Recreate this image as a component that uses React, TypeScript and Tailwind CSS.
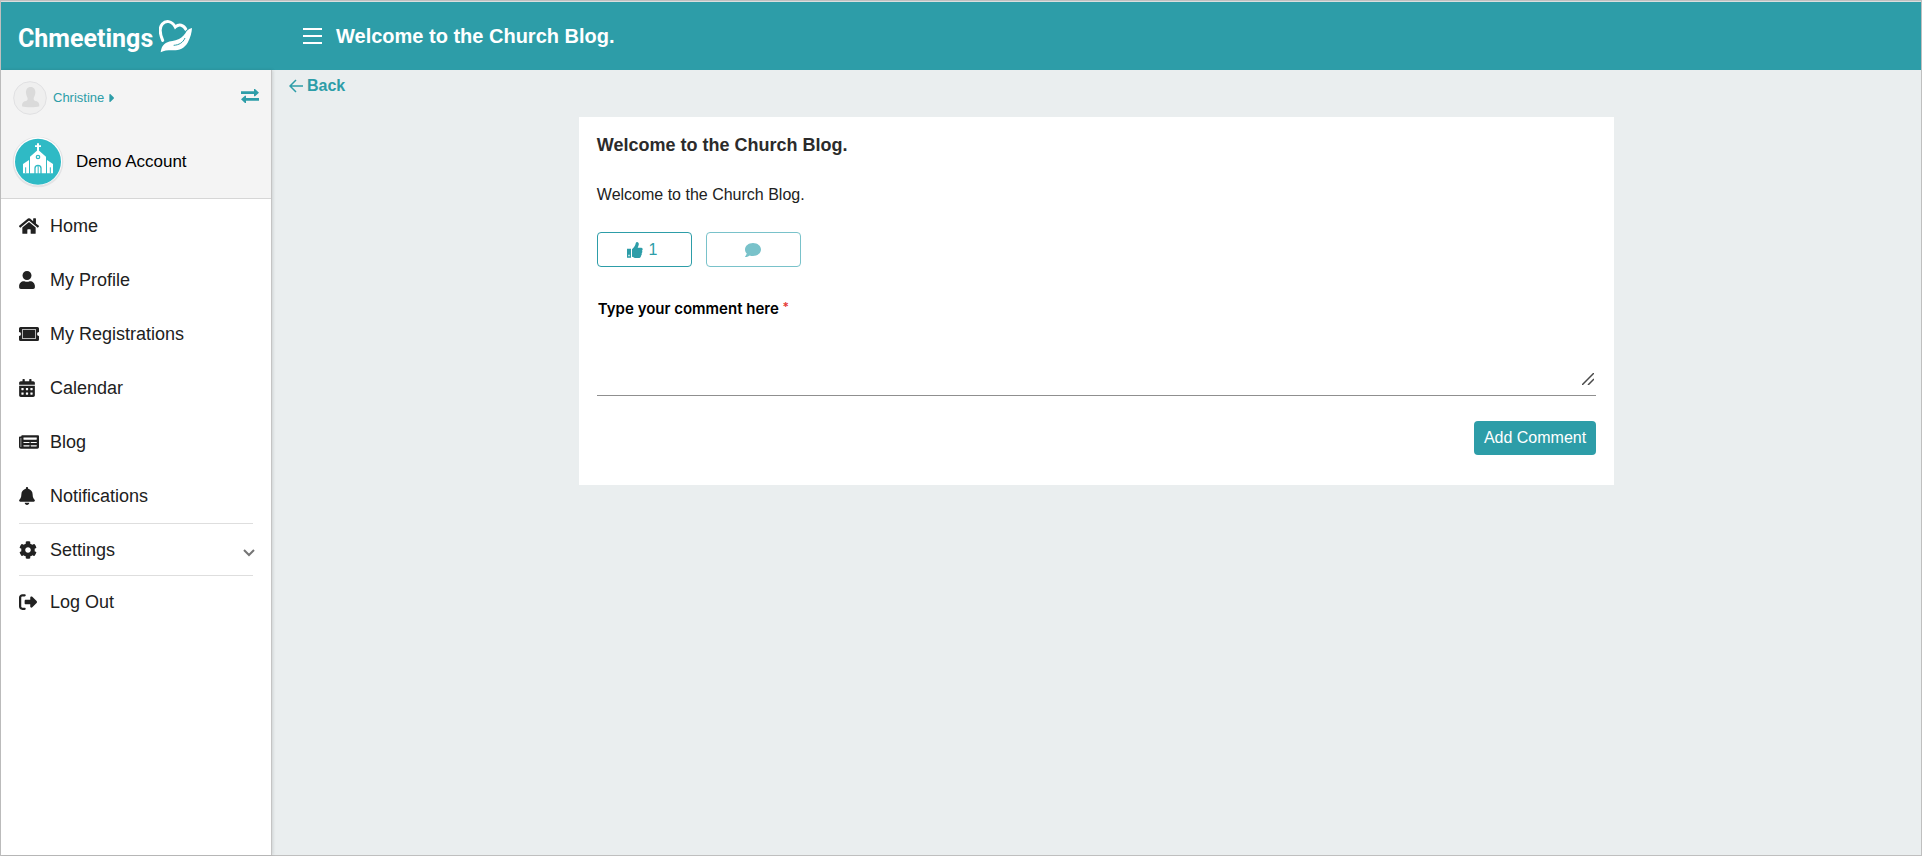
import type { ComponentType } from "react";
import {
  FaHome,
  FaUser,
  FaCalendarAlt,
  FaNewspaper,
  FaBell,
  FaCog,
  FaComment,
  FaCaretRight,
} from "react-icons/fa";
import { FaRightFromBracket } from "react-icons/fa6";

interface IconProps {
  className?: string;
}

interface MenuItem {
  label: string;
  icon: ComponentType<IconProps>;
  size: string;
}

function TicketIcon({ className }: IconProps) {
  return (
    <svg className={className} viewBox="0 0 20 18" aria-hidden="true">
      <path
        fill="currentColor"
        d="M1.5 2h17A1.5 1.5 0 0 1 20 3.5v3.5a2 2 0 0 0 0 4v3.5a1.5 1.5 0 0 1-1.5 1.5h-17A1.5 1.5 0 0 1 0 14.5V11a2 2 0 0 0 0-4V3.5A1.5 1.5 0 0 1 1.5 2z"
      />
      <rect x="3.5" y="4.5" width="13" height="9" fill="none" stroke="#b8b8b8" />
    </svg>
  );
}

function HandHeart() {
  return (
    <svg className="h-[34px] w-[34px]" viewBox="0 0 102 102" aria-hidden="true">
      <path
        d="M11 64C3 45 1 25 10 15C20 4 38 4 49 24C60 14 74 17 81 32"
        fill="none"
        stroke="#fff"
        strokeWidth="9"
        strokeLinecap="round"
      />
      <path
        fill="#fff"
        stroke="#2d9da8"
        strokeWidth="6"
        paintOrder="stroke"
        d="M5 100C7 86 11 77 22 71C34 65 46 67 60 60C70 55 79 45 83 36C88 32 93 28 99 27C98 40 95 56 86 71C75 89 59 95 39 94C25 94 15 95 5 100Z"
      />
      <path d="M44 79C60 78 72 71 78 57" fill="none" stroke="#2d9da8" strokeWidth="3" />
    </svg>
  );
}

function ChurchBadge() {
  return (
    <svg className="h-[52px] w-[52px]" viewBox="0 0 156 156" aria-hidden="true">
      <circle cx="78" cy="78" r="76" fill="#e3e3e5" />
      <circle cx="78" cy="76" r="72" fill="#fff" />
      <circle cx="78" cy="77" r="69" fill="#2fbac5" />
      <g fill="#fff">
        <path d="M75 22h6v6h6v5h-6v11h-6V33h-6v-5h6z" />
        <path d="M78 41L102 62V112H89V97a11 11 0 0 0-22 0V112H54V62z" />
        <path d="M51 72V112H33V84z" />
        <path d="M105 72V112H123V84z" />
        <path d="M71 112V97a7 7 0 0 1 14 0V112h-5V90h-3V112z" />
      </g>
      <circle cx="78" cy="63" r="5" fill="#fff" stroke="#2fbac5" strokeWidth="4" />
      <path d="M41 112V94M115 112V94" stroke="#2fbac5" strokeWidth="3" />
    </svg>
  );
}

function Avatar() {
  return (
    <svg className="h-[34px] w-[34px]" viewBox="0 0 102 102" aria-hidden="true">
      <circle cx="51" cy="51" r="49" fill="#efefef" stroke="#e0e0e2" strokeWidth="3" />
      <path
        fill="#dadada"
        d="M53 18c10 0 15 8 14 18c-1 9-4 11-5 17c0 5 3 6 9 8c6 2 8 6 8 15c-10 4-42 4-52 0c0-9 2-13 8-15c6-2 9-3 9-8c-1-6-4-8-5-17c-1-10 4-18 14-18z"
      />
    </svg>
  );
}

function SwapIcon() {
  return (
    <svg className="h-[14px] w-[18px]" viewBox="0 0 54 42" aria-hidden="true">
      <path fill="#2d9da8" d="M0 7h39V0h3l12 11l-12 11h-3V15H0zM54 27H15V20h-3L0 31l12 11h3V35h39z" />
    </svg>
  );
}

function ThumbIcon() {
  return (
    <svg className="h-4 w-4" viewBox="0 0 48 48" aria-hidden="true">
      <path fill="currentColor" fillRule="evenodd" d="M0 20h12v27H0zM4 38v5h4v-5z" />
      <path
        fill="currentColor"
        d="M15 22C19 18 23 13 25 8C26 4 27 0 30 0C35 0 36 5 35 9C34 12 33 15 32 17H43C48 18 48 24 45 26C47 29 46 32 44 34C45 37 44 40 42 41C42 45 39 48 34 48H27C22 48 19 45 15 44z"
      />
    </svg>
  );
}

const menu: MenuItem[] = [
  { label: "Home", icon: FaHome, size: "h-[18px] w-5" },
  { label: "My Profile", icon: FaUser, size: "h-[18px] w-4" },
  { label: "My Registrations", icon: TicketIcon, size: "h-[18px] w-5" },
  { label: "Calendar", icon: FaCalendarAlt, size: "h-[18px] w-4" },
  { label: "Blog", icon: FaNewspaper, size: "h-[18px] w-5" },
  { label: "Notifications", icon: FaBell, size: "h-[18px] w-4" },
];

function Header() {
  return (
    <header className="flex h-[69px] items-center border-t border-[#d9dede] bg-[#2d9da8] text-white">
      <a href="#" className="flex w-[284px] items-center pl-[17px]">
        <span className="pt-1.5 font-[Roboto] text-[25px] leading-8 font-bold">Chmeetings</span>
        <span className="ml-1.5">
          <HandHeart />
        </span>
      </a>
      <button aria-label="Toggle menu" className="ml-[18px] flex flex-col gap-[5px]">
        <span className="h-0.5 w-[19px] bg-white" />
        <span className="h-0.5 w-[19px] bg-white" />
        <span className="h-0.5 w-[19px] bg-white" />
      </button>
      <h1 className="ml-3.5 text-xl font-bold">Welcome to the Church Blog.</h1>
    </header>
  );
}

function Sidebar() {
  return (
    <aside className="z-10 w-[271px] shrink-0 border-r border-[#c4c4c4] bg-white shadow-[1px_0_3px_rgba(0,0,0,0.12)]">
      <div className="h-[129px] border-b border-[#d6d6d6] bg-[#f4f4f4] px-[11px] pt-[11px]">
        <div className="flex items-center justify-between px-px">
          <a href="#" className="flex items-center text-[13px] text-[#2d9da8]">
            <Avatar />
            <span className="ml-1.5">Christine</span>
            <FaCaretRight className="ml-1 h-3.5 w-2" />
          </a>
          <button aria-label="Switch account" className="pb-1">
            <SwapIcon />
          </button>
        </div>
        <div className="mt-[21px] flex items-center">
          <ChurchBadge />
          <span className="ml-3 text-[17px] text-black">Demo Account</span>
        </div>
      </div>

      <nav className="text-lg text-[#212121]">
        {menu.map(({ label, icon: Icon, size }) => (
          <a key={label} href="#" className="flex h-[54px] items-center px-[18px]">
            <span className="w-[31px]">
              <Icon className={size} />
            </span>
            {label}
          </a>
        ))}
        <div className="mx-[18px] border-y border-[#dedede]">
          <button className="flex h-[51px] w-full items-center text-left">
            <span className="w-[31px]">
              <FaCog className="h-[18px] w-[18px]" />
            </span>
            <span className="grow">Settings</span>
            <svg className="-mr-0.5 mt-1.5 h-2 w-3" viewBox="0 0 12 8" aria-hidden="true">
              <path d="M1 1l5 5l5-5" fill="none" stroke="#757575" strokeWidth="2" />
            </svg>
          </button>
        </div>
        <a href="#" className="flex h-[51px] items-center px-[18px]">
          <span className="w-[31px]">
            <FaRightFromBracket className="h-[18px] w-[18px]" />
          </span>
          Log Out
        </a>
      </nav>
    </aside>
  );
}

function Post() {
  return (
    <article className="mx-auto w-2/3 bg-white px-[18px] pt-4 pb-[30px]">
      <h2 className="text-lg leading-6 font-bold text-[#2b2b2b]">Welcome to the Church Blog.</h2>
      <p className="mt-[26px] text-base text-[#212121]">Welcome to the Church Blog.</p>
      <div className="mt-[25px] flex gap-3.5">
        <button className="flex h-[35px] w-[95px] items-center justify-center gap-[5px] rounded border border-[#2d9da8] pr-1 text-base text-[#2d9da8]">
          <ThumbIcon />
          <span>1</span>
        </button>
        <button
          aria-label="Comments"
          className="flex h-[35px] w-[95px] items-center justify-center rounded border border-[#79c2ca] text-[#79c2ca]"
        >
          <FaComment className="h-4 w-4" />
        </button>
      </div>
      <form>
        <label htmlFor="comment" className="mt-8 block pl-px font-[Inter] text-[15px] leading-5 font-semibold text-black">
          Type your comment here <span className="align-top text-xs text-[#e53935]">*</span>
        </label>
        <div className="relative border-b border-[#8f8f8f] pb-2">
          <textarea id="comment" className="block h-[68px] w-full resize-none outline-none" />
          <svg className="pointer-events-none absolute right-0.5 bottom-2.5 h-3 w-3" viewBox="0 0 12 12" aria-hidden="true">
            <path d="M0 12L12 0M6 12l6-6" stroke="#4a4a4a" strokeWidth="1.5" />
          </svg>
        </div>
        <div className="mt-[25px] flex justify-end">
          <button type="button" className="h-[34px] rounded bg-[#2d9da8] px-2.5 text-base text-white">
            Add Comment
          </button>
        </div>
      </form>
    </article>
  );
}

export default function App() {
  return (
    <div className="flex min-h-screen flex-col border border-[#bfbfbf] bg-[#eaeeef] font-['Liberation_Sans',Arial,sans-serif]">
      <Header />
      <div className="flex grow">
        <Sidebar />
        <main className="grow">
          <a href="#" className="ml-[17px] mt-1 flex w-fit items-center gap-1 text-base font-bold text-[#2d9da8]">
            <svg className="h-3.5 w-3.5" viewBox="0 0 14 14" aria-hidden="true">
              <path d="M7 1L1 7l6 6M1 7h13" fill="none" stroke="currentColor" strokeWidth="1.5" />
            </svg>
            Back
          </a>
          <div className="mt-[19px] px-12">
            <Post />
          </div>
        </main>
      </div>
    </div>
  );
}
